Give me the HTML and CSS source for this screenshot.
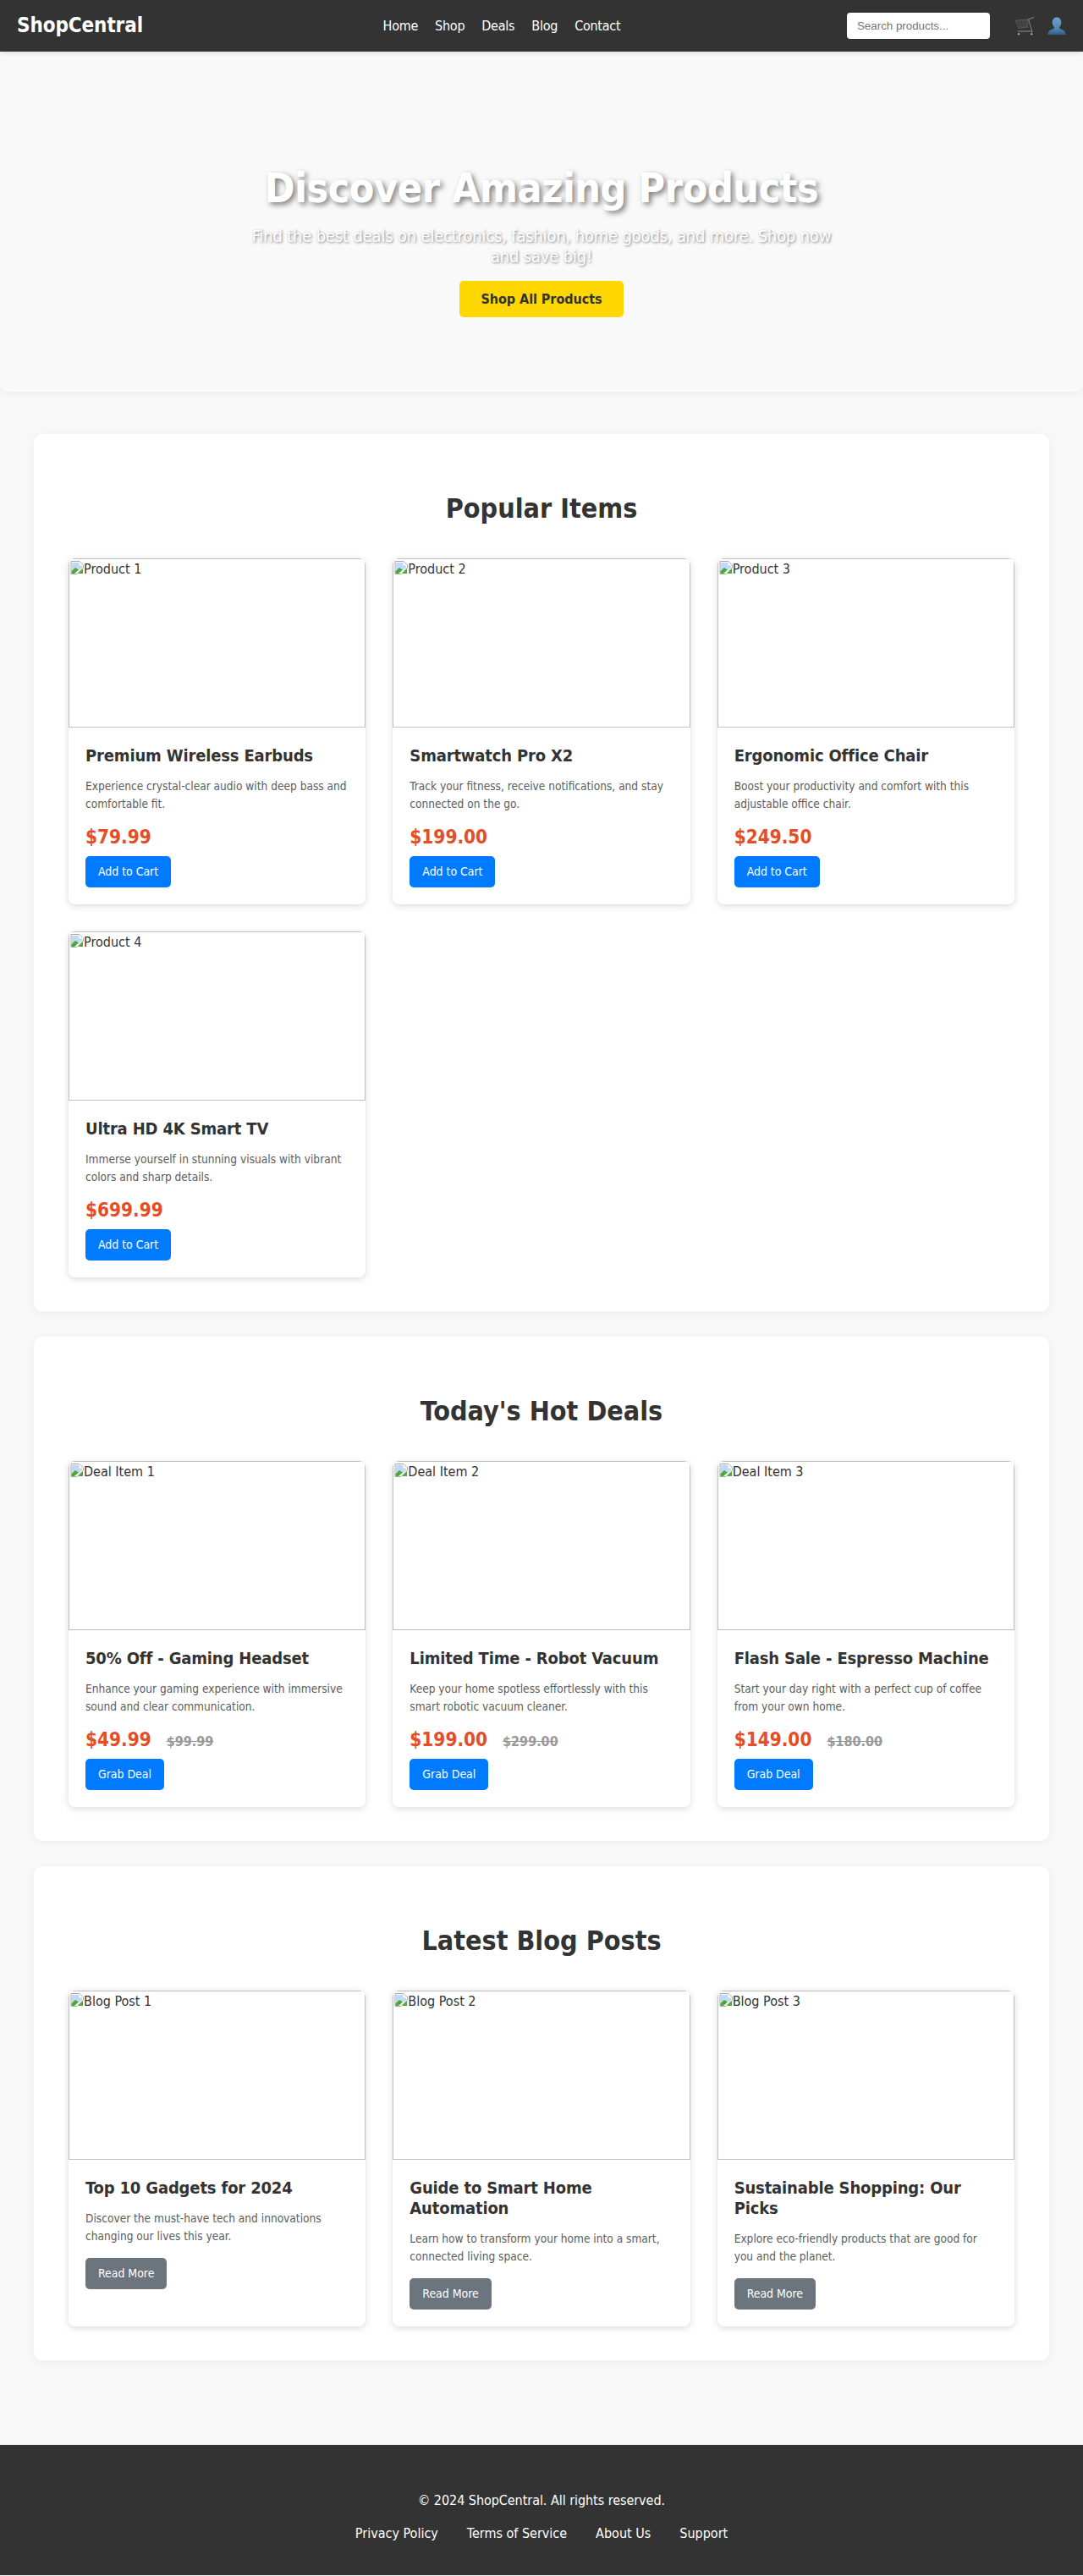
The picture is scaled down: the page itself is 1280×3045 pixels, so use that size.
FILE: index.html
```html
<!DOCTYPE html>
<html lang="en">
<head>
<meta charset="utf-8">
<title>ShopCentral</title>
<link rel="stylesheet" href="styles.css">
</head>
<body>
<header class="site-header">
  <div class="logo">ShopCentral</div>
  <nav class="main-nav"><a>Home</a><a>Shop</a><a>Deals</a><a>Blog</a><a>Contact</a></nav>
  <div class="tools">
    <input class="search" type="text" placeholder="Search products...">
    <svg class="cart" viewBox="0 0 24 24"><path d="M.5 4.500L17 3l-1.500 10.500L4 14.500z" fill="#4c4c4c" stroke="#666" stroke-width=".7"/><path d="M4 4.200l1.200 10M8 3.900l.7 10M12 3.500l.3 10.500M1 7.500l15.500-1M2 10.500l14-.8" stroke="#343434" stroke-width=".6"/><path d="M24 .5L17 3l5 17" fill="none" stroke="#8c8c8c" stroke-width="1"/><path d="M3 18.500h19" stroke="#9a9a9a" stroke-width="1"/><circle cx="4.500" cy="22" r="1.300" fill="#aaa"/><circle cx="21" cy="22" r="1.300" fill="#aaa"/></svg>
    <svg class="person" viewBox="0 0 24 24"><defs><linearGradient id="pg" x1="0" y1="0" x2="0" y2="1"><stop offset="0" stop-color="#6f9fcb"/><stop offset=".65" stop-color="#5585b2"/><stop offset="1" stop-color="#2f5d8a"/></linearGradient></defs><path d="M12 .5c3.600 0 5.800 2.900 5.800 6.600 0 2.500-1 4.800-2.600 6.200.2 1.700 1.600 2.300 3.600 3 2.400.9 4.300 2.100 4.700 6.700H.5c.4-4.600 2.300-5.800 4.700-6.700 2-.7 3.400-1.300 3.600-3-1.600-1.400-2.600-3.700-2.600-6.200C6.200 3.400 8.400.5 12 .5z" fill="url(#pg)"/></svg>
  </div>
</header>
<section class="hero">
  <h1>Discover Amazing Products</h1>
  <p>Find the best deals on electronics, fashion, home goods, and more. Shop now and save big!</p>
  <a class="hero-btn">Shop All Products</a>
</section>
<main class="content">
  <section class="panel">
    <h2>Popular Items</h2>
    <div class="grid">
      <article class="card"><div class="thumb"><svg class="broken" viewBox="0 0 16 16"><use href="#b"/></svg>Product 1</div><div class="body"><h3>Premium Wireless Earbuds</h3><p>Experience crystal-clear audio with deep bass and comfortable fit.</p><div class="price"><b>$79.99</b></div><a class="btn">Add to Cart</a></div></article>
      <article class="card"><div class="thumb"><svg class="broken" viewBox="0 0 16 16"><use href="#b"/></svg>Product 2</div><div class="body"><h3>Smartwatch Pro X2</h3><p>Track your fitness, receive notifications, and stay connected on the go.</p><div class="price"><b>$199.00</b></div><a class="btn">Add to Cart</a></div></article>
      <article class="card"><div class="thumb"><svg class="broken" viewBox="0 0 16 16"><use href="#b"/></svg>Product 3</div><div class="body"><h3>Ergonomic Office Chair</h3><p>Boost your productivity and comfort with this adjustable office chair.</p><div class="price"><b>$249.50</b></div><a class="btn">Add to Cart</a></div></article>
      <article class="card"><div class="thumb"><svg class="broken" viewBox="0 0 16 16"><use href="#b"/></svg>Product 4</div><div class="body"><h3>Ultra HD 4K Smart TV</h3><p>Immerse yourself in stunning visuals with vibrant colors and sharp details.</p><div class="price"><b>$699.99</b></div><a class="btn">Add to Cart</a></div></article>
    </div>
  </section>
  <section class="panel">
    <h2>Today's Hot Deals</h2>
    <div class="grid">
      <article class="card"><div class="thumb"><svg class="broken" viewBox="0 0 16 16"><use href="#b"/></svg>Deal Item 1</div><div class="body"><h3>50% Off - Gaming Headset</h3><p>Enhance your gaming experience with immersive sound and clear communication.</p><div class="price"><b>$49.99</b><s>$99.99</s></div><a class="btn">Grab Deal</a></div></article>
      <article class="card"><div class="thumb"><svg class="broken" viewBox="0 0 16 16"><use href="#b"/></svg>Deal Item 2</div><div class="body"><h3>Limited Time - Robot Vacuum</h3><p>Keep your home spotless effortlessly with this smart robotic vacuum cleaner.</p><div class="price"><b>$199.00</b><s>$299.00</s></div><a class="btn">Grab Deal</a></div></article>
      <article class="card"><div class="thumb"><svg class="broken" viewBox="0 0 16 16"><use href="#b"/></svg>Deal Item 3</div><div class="body"><h3>Flash Sale - Espresso Machine</h3><p>Start your day right with a perfect cup of coffee from your own home.</p><div class="price"><b>$149.00</b><s>$180.00</s></div><a class="btn">Grab Deal</a></div></article>
    </div>
  </section>
  <section class="panel">
    <h2>Latest Blog Posts</h2>
    <div class="grid">
      <article class="card"><div class="thumb"><svg class="broken" viewBox="0 0 16 16"><use href="#b"/></svg>Blog Post 1</div><div class="body"><h3>Top 10 Gadgets for 2024</h3><p>Discover the must-have tech and innovations changing our lives this year.</p><a class="btn gray">Read More</a></div></article>
      <article class="card"><div class="thumb"><svg class="broken" viewBox="0 0 16 16"><use href="#b"/></svg>Blog Post 2</div><div class="body"><h3>Guide to Smart Home Automation</h3><p>Learn how to transform your home into a smart, connected living space.</p><a class="btn gray">Read More</a></div></article>
      <article class="card"><div class="thumb"><svg class="broken" viewBox="0 0 16 16"><use href="#b"/></svg>Blog Post 3</div><div class="body"><h3>Sustainable Shopping: Our Picks</h3><p>Explore eco-friendly products that are good for you and the planet.</p><a class="btn gray">Read More</a></div></article>
    </div>
  </section>
</main>
<footer class="site-footer">
  <p>© 2024 ShopCentral. All rights reserved.</p>
  <nav class="foot-nav"><a>Privacy Policy</a><a>Terms of Service</a><a>About Us</a><a>Support</a></nav>
</footer>
<svg class="defs" width="0" height="0"><defs><g id="b"><path d="M1 .5h10l4.500 4.500v3L8 15.500H1z" fill="#fff" stroke="#a9a9a9"/><path d="M2 2h8.500v3.500H14V8l-3 2.500H2z" fill="#c3d8f6"/><path d="M1.500 15v-3l4.500-4 4 2.500-5 4.500z" fill="#4da83a"/><path d="M9 15l6-6v6z" fill="#4da83a"/></g></defs></svg>
</body>
</html>
```
FILE: styles.css
```css
* { box-sizing: border-box; }
body { margin: 0; background: #f8f8f8; color: #333; font-family: "DejaVu Sans Condensed", "DejaVu Sans", sans-serif; font-size: 16px; line-height: 1.2; }
.defs { position: absolute; }
.site-header { background: #333; color: #fff; display: flex; align-items: center; justify-content: space-between; padding: 15px 20px; box-shadow: 0 2px 5px rgba(0,0,0,.1); position: relative; }
.logo { font-size: 24px; font-weight: 700; letter-spacing: -.1px; }
.main-nav { display: flex; gap: 20px; margin-left: 16px; }
.main-nav a { color: #fff; font-size: 16px; letter-spacing: -.25px; }
.tools { display: flex; align-items: center; }
.search { width: 169px; height: 31px; border: 0; border-radius: 4px; padding: 0 12px; font: 13.333px "Liberation Sans", sans-serif; background: #fff; margin-right: 30px; }
.search::placeholder { color: #757575; }
.cart { width: 22px; height: 22px; margin-right: 16px; }
.person { width: 22px; height: 22px; }
.hero { padding: 133px 20px 88.2px; background: #f9f9f9; box-shadow: 0 2px 10px rgba(0,0,0,.05); border-radius: 0 0 10px 10px; display: flex; flex-direction: column; align-items: center; text-align: center; color: #fff; }
.hero h1 { margin: 0 0 15px; font-size: 48px; font-weight: 700; letter-spacing: -.45px; text-shadow: 3px 3px 6px rgba(0,0,0,.5); }
.hero p { margin: 0 0 17px; width: 700px; font-size: 20px; letter-spacing: -.18px; text-shadow: 1px 1px 3px rgba(0,0,0,.5); }
.hero-btn { display: block; background: #ffd700; color: #333; font-weight: 700; font-size: 16px; letter-spacing: -.05px; padding: 12px 25px; border-radius: 5px; }
.content { padding: 50px 40px 100px; display: flex; flex-direction: column; gap: 30px; }
.panel { background: #fff; border-radius: 10px; padding: 68.6px 41px 40px; box-shadow: 0 2px 10px rgba(0,0,0,.05); }
.panel h2 { margin: 0 0 40px; text-align: center; font-size: 32px; color: #333; }
.grid { display: grid; grid-template-columns: repeat(3, 1fr); gap: 32px; }
.card { background: #fff; border-radius: 8px; box-shadow: 0 2px 8px rgba(0,0,0,.15); overflow: hidden; }
.thumb { height: 200px; border: 1px solid #c0c0c0; padding: 2px 1px; color: #333; font-size: 16px; }
.broken { width: 16px; height: 16px; vertical-align: top; }
.body { padding: 20px; }
.body h3 { margin: 0 0 14px; padding-top: 1px; font-size: 20px; letter-spacing: -.16px; color: #333; }
.body p { margin: 0 0 15px; font-size: 13.6px; line-height: 21px; color: #5c5c5c; }
.price { margin-bottom: 10px; }
.price b { font-size: 22.4px; line-height: 26.2px; color: #e44d26; }
.price s { margin-left: 18px; font-size: 16px; color: #999; font-weight: 700; }
.btn { display: block; width: fit-content; background: #007bff; color: #fff; padding: 10px 15px; border-radius: 5px; font-size: 14px; letter-spacing: -.05px; }
.btn.gray { background: #6c757d; }
.site-footer { background: #333; color: #fff; text-align: center; padding: 56px 20px 40px; }
.site-footer p { margin: 0 0 20px; letter-spacing: -.05px; }
.foot-nav { display: flex; justify-content: center; gap: 34px; }
.foot-nav a { color: #fff; }
```
